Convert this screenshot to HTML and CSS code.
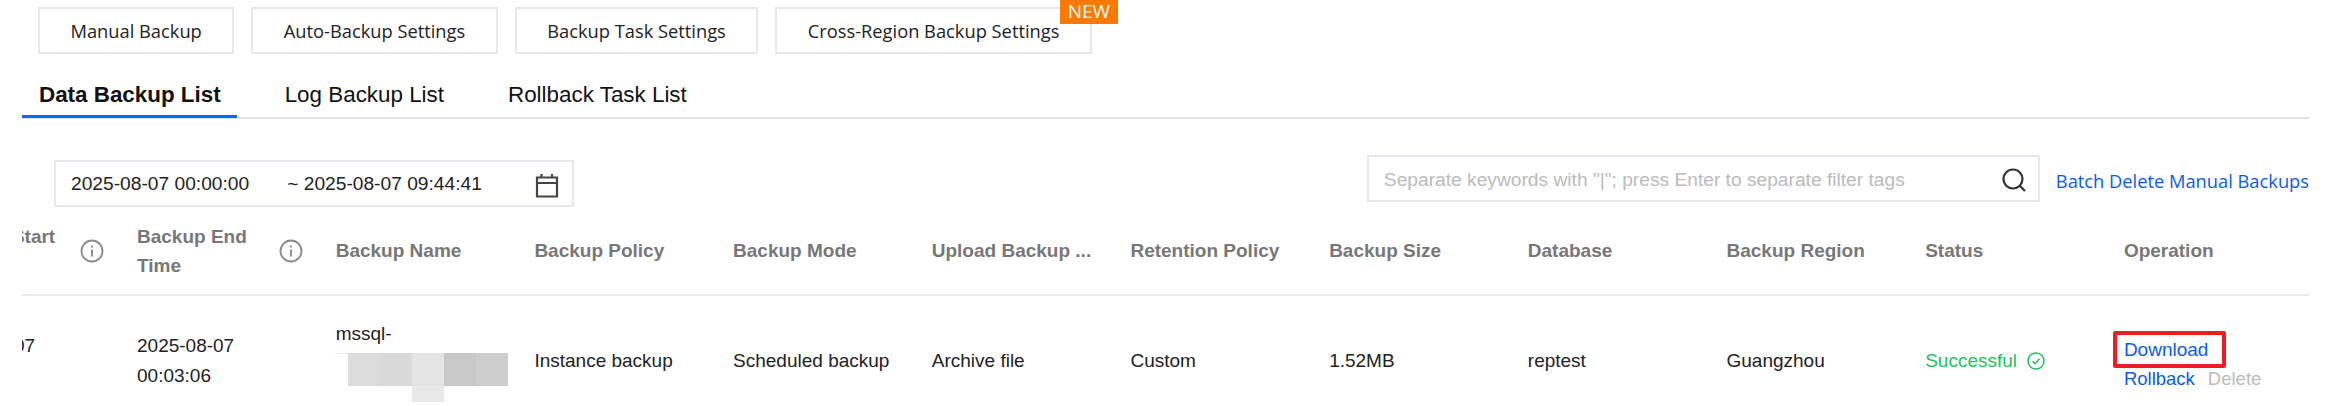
FILE: index.html
```html
<!DOCTYPE html>
<html lang="en">
<head>
  <meta charset="UTF-8" />
  <title>Backup List</title>
  <link rel="stylesheet" href="styles.css">
</head>
<body>
  <div class="actions">
    <button class="btn">Manual Backup</button>
    <button class="btn">Auto-Backup Settings</button>
    <button class="btn">Backup Task Settings</button>
    <button class="btn">Cross-Region Backup Settings<span class="badge">NEW</span></button>
  </div>

  <div class="tabs">
    <a class="tab active">Data Backup List</a>
    <a class="tab">Log Backup List</a>
    <a class="tab">Rollback Task List</a>
  </div>

  <div class="toolbar">
    <div class="date-range">
      <span>2025-08-07 00:00:00</span>
      <span class="date-end">~ 2025-08-07 09:44:41</span>
      <svg class="icon-cal" width="24" height="24" viewBox="0 0 24 24" fill="none" stroke="#444" stroke-width="2.2">
        <path d="M2 3.5h20v19H2zM2 9h20M6.5 0v3.5M17 0v3.5"/>
      </svg>
    </div>
    <div class="toolbar-right">
      <div class="search">
        <span class="placeholder">Separate keywords with "|"; press Enter to separate filter tags</span>
        <svg width="24" height="24" viewBox="0 0 24 24" fill="none" stroke="#333" stroke-width="2.2">
          <circle cx="11" cy="11" r="9.5"/><path d="M18 18l5 5"/>
        </svg>
      </div>
      <a class="batch">Batch Delete Manual Backups</a>
    </div>
  </div>

  <div class="table">
    <div class="row head">
      <div class="cell tip first">
        <span class="tip-label">Backup Start Time</span>
        <svg class="info" width="24" height="24" viewBox="0 0 24 24" fill="none" stroke="#888" stroke-width="1.8"><circle cx="12" cy="12" r="10.5"/><path d="M12 10.5v7M12 6.5v2"/></svg>
      </div>
      <div class="cell tip">
        <span class="tip-label">Backup End Time</span>
        <svg class="info" width="24" height="24" viewBox="0 0 24 24" fill="none" stroke="#888" stroke-width="1.8"><circle cx="12" cy="12" r="10.5"/><path d="M12 10.5v7M12 6.5v2"/></svg>
      </div>
      <div class="cell">Backup Name</div>
      <div class="cell">Backup Policy</div>
      <div class="cell">Backup Mode</div>
      <div class="cell">Upload Backup ...</div>
      <div class="cell">Retention Policy</div>
      <div class="cell">Backup Size</div>
      <div class="cell">Database</div>
      <div class="cell">Backup Region</div>
      <div class="cell">Status</div>
      <div class="cell">Operation</div>
    </div>
    <div class="row body">
      <div class="cell first"><div class="first-text">2025-08-07<br>00:00:01</div></div>
      <div class="cell">2025-08-07<br>00:03:06</div>
      <div class="cell name">
        <div>mssql-</div>
        <div class="mosaic">
          <i class="m0"></i><i class="m1"></i><i class="m2"></i><i class="m3"></i><i class="m4"></i><i class="m5"></i>
        </div>
      </div>
      <div class="cell">Instance backup</div>
      <div class="cell">Scheduled backup</div>
      <div class="cell">Archive file</div>
      <div class="cell">Custom</div>
      <div class="cell">1.52MB</div>
      <div class="cell">reptest</div>
      <div class="cell">Guangzhou</div>
      <div class="cell status">Successful
        <svg width="18" height="18" viewBox="0 0 18 18" fill="none" stroke="#1cc25e" stroke-width="1.5"><circle cx="9" cy="9" r="8"/><path d="M5.5 9.2l2.5 2.5 4.5-5"/></svg>
      </div>
      <div class="cell ops">
        <a class="link download">Download</a>
        <div class="ops-line"><a class="link">Rollback</a><a class="disabled">Delete</a></div>
      </div>
    </div>
  </div>
</body>
</html>
```

FILE: styles.css
```css
html, body {
  margin: 0;
  height: 406px;
  overflow: hidden;
}
body {
  background: #fff;
  color: #222;
  font-family: "Liberation Sans", Arial, sans-serif;
  font-size: 19px;
  width: 2337px;
}
.actions {
  display: flex;
  gap: 17px;
  padding: 7px 0 0 38px;
}
.btn {
  position: relative;
  height: 47px;
  padding: 0 30.5px;
  background: #fff;
  border: 2px solid #e7e8ef;
  color: #222;
  font-family: "Open Sans", sans-serif;
  font-size: 18.3px;
}
.badge {
  position: absolute;
  top: -9px;
  right: -28px;
  width: 58px;
  height: 24px;
  line-height: 22px;
  background: #ff7800;
  color: #fff;
  font-size: 19px;
  text-align: center;
}
.tabs {
  display: flex;
  gap: 64px;
  margin: 0 28px 0 22px;
  padding-left: 17px;
  height: 63px;
  border-bottom: 2px solid #e3e3e6;
  color: #111;
  font-size: 22.4px;
}
.tab {
  position: relative;
  line-height: 82px;
  height: 63px;
}
.tab.active {
  font-weight: bold;
}
.tab.active::after {
  content: "";
  position: absolute;
  left: -17px;
  right: -16px;
  bottom: -1px;
  height: 3px;
  background: #006eff;
}
.toolbar {
  display: flex;
  justify-content: space-between;
  align-items: flex-start;
  margin: 41px 28px 0 54px;
}
.date-range {
  display: flex;
  align-items: center;
  width: 520px;
  height: 47px;
  box-sizing: border-box;
  padding-left: 15px;
  border: 2px solid #e7e8ef;
  font-size: 19.2px;
}
.date-end {
  margin-left: 38px;
}
.icon-cal {
  margin: 5px 13px 0 auto;
}
.toolbar-right {
  display: flex;
  gap: 16px;
  margin-top: -5px;
}
.search {
  display: flex;
  align-items: center;
  justify-content: space-between;
  width: 673px;
  height: 47px;
  box-sizing: border-box;
  padding: 2px 12px 0 15px;
  border: 2px solid #e7e8ef;
  font-size: 19.2px;
}
.placeholder {
  color: #bbb;
}
.batch {
  color: #0a5ce8;
  font-family: "Open Sans", sans-serif;
  font-size: 18.3px;
  line-height: 51px;
}
.table {
  margin: 0 28px 0 22px;
}
.row {
  display: grid;
  grid-template-columns: 115px repeat(10, 198.7px) 1fr;
}
.head {
  height: 87px;
  align-items: center;
  border-bottom: 2px solid #e9e9f0;
  color: #777;
  font-weight: bold;
  line-height: 29px;
}
.body {
  height: 130px;
  align-items: center;
  line-height: 30px;
}
.cell {
  min-width: 0;
}
.first {
  overflow: hidden;
}
.first-text {
  margin-left: -84px;
  width: 120px;
}
.tip {
  display: flex;
  align-items: center;
}
.tip.first .tip-label {
  margin-left: -84px;
}
.tip-label {
  flex: 0 0 142px;
}
.info {
  flex: none;
}
.name {
  align-self: start;
  padding-top: 23px;
  line-height: 29px;
}
.mosaic {
  display: flex;
  align-items: flex-start;
  margin: 5px 0 0 -1px;
}
.mosaic i {
  display: block;
  width: 32px;
  height: 33px;
}
.mosaic .m0 {
  width: 13px;
  height: 1px;
  background: #eee;
}
.m1 { background: #dcdcdc; }
.m2 { background: #d9d9d9; }
.mosaic .m3 {
  height: 49px;
  background: linear-gradient(#e4e4e4 33px, #e9e9e9 33px);
}
.m4 { background: #c8c8c8; }
.m5 { background: #cdcdcd; }
.status {
  color: #1cc25e;
}
.status svg {
  vertical-align: -3px;
  margin-left: 5px;
}
.ops {
  margin-top: -2px;
}
.link {
  color: #0a5ce8;
}
.download {
  display: inline-block;
  width: 98px;
  height: 29px;
  line-height: 29px;
  padding-left: 7px;
  margin-left: -11px;
  border: 4px solid #ee1c25;
  border-radius: 2px;
}
.ops-line {
  font-size: 18.5px;
  line-height: 22px;
}
.disabled {
  color: #bbb;
  margin-left: 13px;
}
```
